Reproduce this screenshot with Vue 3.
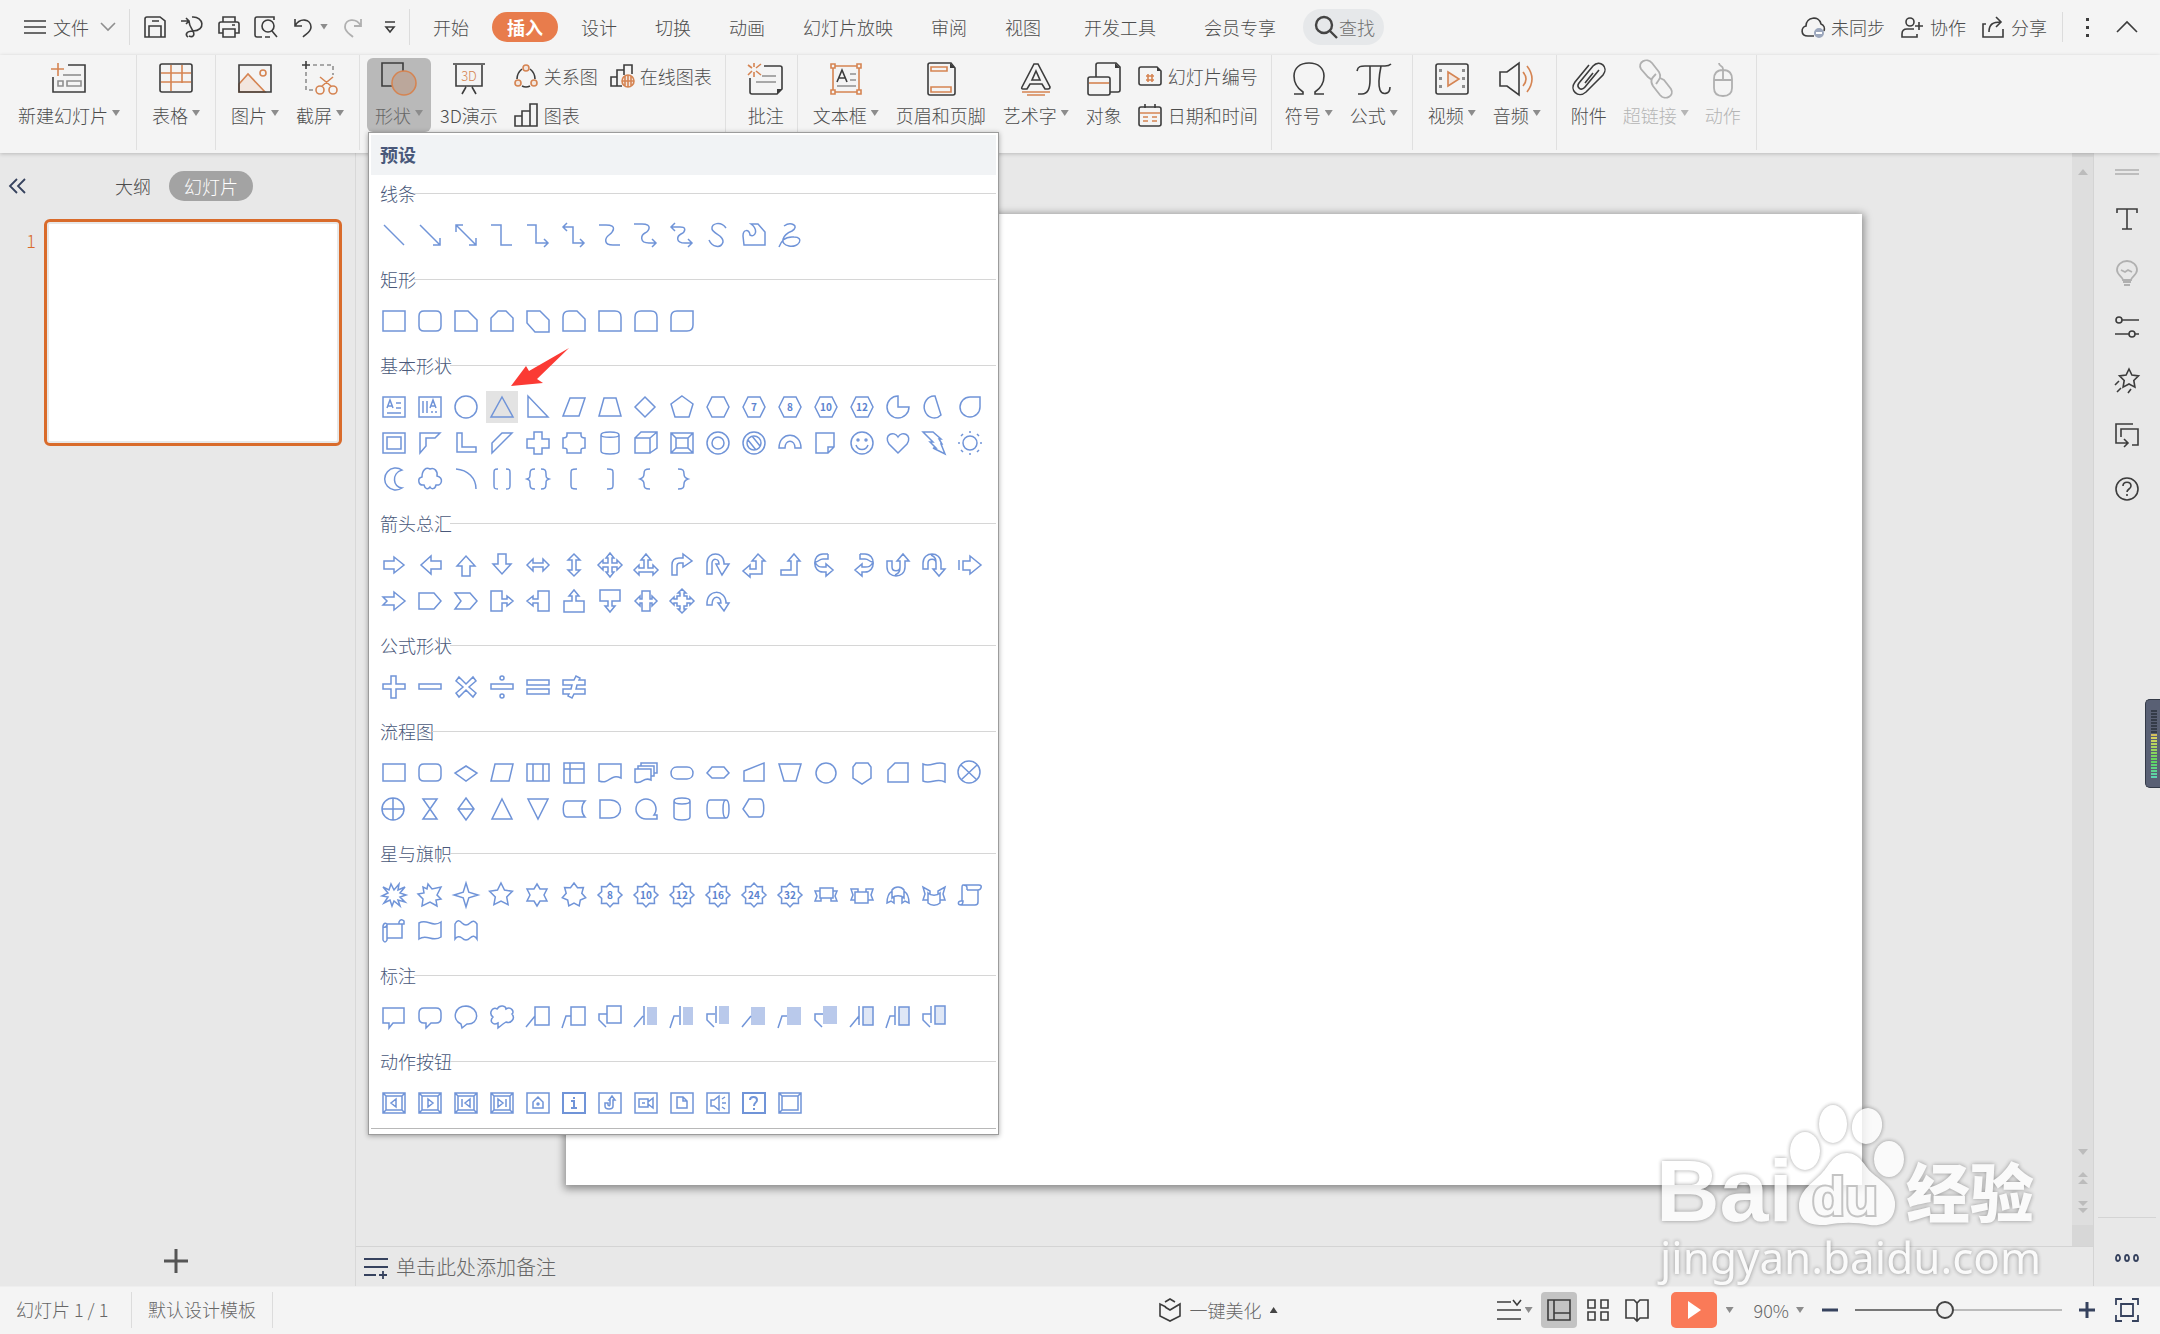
<script setup>
import { ref } from 'vue'

const poly = pts => 'M' + pts.map(p => p.map(n => Math.round(n * 10) / 10).join(' ')).join('L') + 'Z'
const star = (n, outer, inner, cx = 12, cy = 12) =>
  poly(Array.from({ length: n * 2 }, (_, i) => {
    const r = i % 2 ? inner : outer
    const a = (Math.PI * i) / n - Math.PI / 2
    return [cx + r * Math.cos(a), cy + r * Math.sin(a)]
  }))
const oval = (cx, cy, rx, ry = rx) =>
  `M${cx - rx} ${cy}a${rx} ${ry} 0 1 0 ${2 * rx} 0a${rx} ${ry} 0 1 0 ${-2 * rx} 0Z`
const box = (x, y, w, h) => `M${x} ${y}h${w}v${h}h${-w}Z`
const s = (d, o = {}) => ({ d, ...o })
const rot = a => ({ tr: `rotate(${a} 12 12)` })
const flip = { tr: 'matrix(-1 0 0 1 24 0)' }
const flipDown = { tr: 'matrix(1 0 0 -1 0 24)' }

const hexagon = 'M1 12L6 2H18L23 12L18 22H6Z'
const badge = star(8, 12, 9)
const arrow = 'M1 8H11V3L21 12L11 21V16H1Z'
const frame = box(1, 2, 22, 20)
const bevel = frame + box(4, 5, 16, 14) + 'M1 2L4 5M23 2L20 5M1 22L4 19M23 22L20 19'
const leader = ['M0 22L9 11', 'M0 23L4 11H9', 'M8 22L1 15V9H9']
const uturn = 'M1 21V10C1 -2 18 -2 18 10V11H23L16 22L10 11H13C13 5 6 5 6 10V21Z'
const curved = 'M14 1H9C-2 1 -2 19 9 19H12V23L19 17L12 11V14H9M14 1V6H9C5 6 5 9 1 9M1 9C3 14 6 14 9 14'
const swoop = 'M1 8V14C1 26 19 26 19 14V8H23L17 1L11 8H14V14C14 19 6 19 6 14V8ZM9 22C14 20 14 17 14 14'

const sections = [
  { title: '线条', shapes: [
    s('M2 2L22 22'),
    s('M2 2L22 22M22 15V22H15'),
    s('M2 2L22 22M22 15V22H15M2 9V2H9'),
    s('M1 2H11V22H22'),
    s('M1 2H10V20H22M18 16L22 20L18 24'),
    s('M1 4H11V20H22M18 16L22 20L18 24M5 0L1 4L5 8'),
    s('M1 2H8C20 2 15 9 11 12S5 22 15 22H22'),
    s('M0 1H8C19 1 15 8 11 10S5 20 15 20H22M18 16L22 20L18 24'),
    s('M1 4H8C18 3 15 9 11 11S5 20 15 20H22M18 16L22 20L18 24M5 0L1 4L5 8'),
    s('M20 5C15 -2 5 0 6 6C7 11 18 12 17 19C15 26 6 24 3 17'),
    s('M2 22L1 13C1 6 7 6 8 12C13 15 17 7 9 1H16L23 9V22Z'),
    s('M6 3C13 -2 22 3 14 8C4 12 1 21 11 23C21 25 27 14 16 14C6 13 3 19 1 24')
  ] },
  { title: '矩形', shapes: [
    s(frame),
    s('M6 2H18Q23 2 23 7V17Q23 22 18 22H6Q1 22 1 17V7Q1 2 6 2Z'),
    s('M1 2H14L23 11V22H1Z'),
    s('M8 2H16L23 9V22H1V9Z'),
    s('M1 2H14L23 11V23H9L1 14Z'),
    s('M7 2H15L23 10V22H1V8Q1 2 7 2Z'),
    s('M1 2H17Q23 2 23 8V22H1Z'),
    s('M7 2H17Q23 2 23 8V22H1V8Q1 2 7 2Z'),
    s('M7 2H23V16Q23 22 17 22H1V8Q1 2 7 2Z')
  ] },
  { title: '基本形状', shapes: [
    s(frame + 'M5 13L8 5L11 13M6 11H10M14 8H19M14 13H19M5 18H19'),
    s(frame + 'M5 6V18M9 6V18M12 13L15 5L18 13M13 11H17M14 16V18M18 16V18'),
    s(oval(12, 12, 11)),
    s('M12 2L23 22H1Z', { active: true }),
    s('M2 1V22H22Z'),
    s('M8 3H23L17 21H1Z'),
    s('M6 3H18L23 21H1Z'),
    s('M11 2L21 12L11 22L1 12Z'),
    s('M12 1L23 9L19 22H5L1 9Z'),
    s(hexagon),
    s(hexagon, { t: '7' }),
    s(hexagon, { t: '8' }),
    s(hexagon, { t: '10' }),
    s(hexagon, { t: '12' }),
    s('M12 1A11 11 0 1 0 23 12H12Z'),
    s('M13 1A10 11 0 1 0 19 20Z'),
    s('M22 2V12A10 10 0 1 1 12 2Z'),
    s(frame + box(5, 6, 14, 12)),
    s('M2 2H22L17 7H8V15L2 22Z'),
    s('M3 2H8V16H22V21H3Z'),
    s('M2 12L12 2H22L2 22Z'),
    s('M8 1H16V8H23V17H16V23H8V17H1V8H8Z'),
    s('M5 2H19V4Q19 7 23 7V17Q19 17 19 19V22H5V19Q5 17 1 17V7Q5 7 5 4Z'),
    s('M3 4V20C3 24 21 24 21 20V4C21 0 3 0 3 4C3 7 21 7 21 4'),
    s('M1 7H16V22H1ZM1 7L7 1H23V17L16 22M16 7L23 1'),
    s(frame + box(6, 7, 12, 10) + 'M1 2L6 7M23 2L18 7M1 22L6 17M23 22L18 17'),
    s(oval(12, 12, 11) + oval(12, 12, 6)),
    s(oval(12, 12, 11) + oval(12, 12, 7) + 'M6 9L14 19M10 5L18 15'),
    s('M1 17C1 0 23 0 23 17H17C17 8 7 8 7 17Z'),
    s('M2 2H20V16L14 22H2ZM14 22V16H20'),
    s(oval(12, 12, 11) + oval(8, 9, 1) + oval(16, 9, 1) + 'M6 14C8 20 16 20 18 14'),
    s('M12 22L3 13C-3 4 8 -1 12 6C16 -1 27 4 21 13Z'),
    s('M1 1H11L19 8H17L20 13H19L23 23L11 17H14L8 11H11Z'),
    s(oval(12, 12, 7) + 'M11 1H13M11 23H13M1 11V13M23 11V13M3 5L5 3M19 3L21 5M3 19L5 21M19 21L21 19'),
    s('M20 3A11 11 0 1 0 20 21C11 21 9 6 20 3Z'),
    s('M6 18C0 19 -1 11 4 10C4 3 8 0 12 2C16 0 20 4 19 9C26 11 24 19 18 18C17 23 13 22 12 20C10 23 7 22 6 18Z'),
    s('M2 2C14 3 22 11 22 22'),
    s('M8 2C4 2 4 3 4 6V18C4 21 4 22 8 22M16 2C20 2 20 3 20 6V18C20 21 20 22 16 22'),
    s('M9 2C5 2 4 3 4 7C4 10 4 11 1 12C4 13 4 14 4 17C4 21 5 22 9 22M15 2C19 2 20 3 20 7C20 10 20 11 23 12C20 13 20 14 20 17C20 21 19 22 15 22'),
    s('M15 2C9 2 9 3 9 6V18C9 21 9 22 15 22'),
    s('M9 2C15 2 15 3 15 6V18C15 21 15 22 9 22'),
    s('M16 2C11 2 10 3 10 7C10 10 9 11 6 12C9 13 10 14 10 17C10 21 11 22 16 22'),
    s('M8 2C13 2 14 3 14 7C14 10 15 11 18 12C15 13 14 14 14 17C14 21 13 22 8 22')
  ] },
  { title: '箭头总汇', shapes: [
    s('M2 8H12V4L22 12L12 20V16H2Z'),
    s(arrow, rot(180)),
    s(arrow, rot(270)),
    s(arrow, rot(90)),
    s('M1 12L7 6V10H17V6L23 12L17 18V14H7V18Z'),
    s('M1 12L7 6V10H17V6L23 12L17 18V14H7V18Z', rot(90)),
    s('M12 0L16 5H14V10H19V7L24 12L19 17V14H14V19H16L12 24L8 19H10V14H5V17L0 12L5 7V10H10V5H8Z'),
    s('M12 1L17 7H14V15H19V12L24 17L19 22V19H5V22L0 17L5 12V15H10V7H7Z'),
    s('M2 22V12Q2 5 9 5H13V1L22 8L13 14V10H10Q7 10 7 13V22Z'),
    s(uturn),
    s('M16 1L23 8H20V21H8V24L1 18L8 12V16H14V8H10Z'),
    s('M16 1L22 8H19V22H3V17H13V8H10Z'),
    s(curved),
    s(curved, flip),
    s(swoop),
    s(swoop, flipDown),
    s('M1 7V17M5 8H12V3L23 12L12 21V17H5Z'),
    s('M1 8H12V3L23 12L12 21V16H1L5 12Z'),
    s('M1 4H16L23 12L16 20H1Z'),
    s('M1 4H16L23 12L16 20H1L7 12Z'),
    s('M1 2H12V10H17V7L23 12L17 17V14H12V22H1Z'),
    s('M1 2H12V10H17V7L23 12L17 17V14H12V22H1Z', flip),
    s('M1 2H12V10H17V7L23 12L17 17V14H12V22H1Z', rot(270)),
    s('M1 2H12V10H17V7L23 12L17 17V14H12V22H1Z', rot(90)),
    s('M8 2H16V10H18V7L23 12L18 17V14H16V22H8V14H6V17L1 12L6 7V10H8Z'),
    s('M12 0L16 4H14V7H17V10H20V8L24 12L20 16V14H17V17H14V20H16L12 24L8 20H10V17H7V14H4V16L0 12L4 8V10H7V7H10V4H8Z'),
    s('M1 16C0 -1 20 0 20 14H23L18 22L12 14H15C15 6 6 6 6 16Z')
  ] },
  { title: '公式形状', shapes: [
    s('M9 1H14V9H23V14H14V23H9V14H1V9H9Z'),
    s(box(1, 9, 22, 5)),
    s('M5 2L12 9L19 2L22 6L15 12L22 18L19 22L12 15L5 22L2 18L9 12L2 6Z'),
    s(oval(12, 3, 2) + oval(12, 21, 2) + box(1, 9, 22, 5)),
    s(box(1, 5, 22, 5) + box(1, 14, 22, 5)),
    s('M1 5H12L14 1L18 3L17 5H23V10H15L14 14H23V19H12L10 23L6 21L7 19H1V14H9L10 10H1Z')
  ] },
  { title: '流程图', shapes: [
    s(box(1, 3, 22, 17)),
    s('M6 3H18Q23 3 23 8V15Q23 20 18 20H6Q1 20 1 15V8Q1 3 6 3Z'),
    s('M12 5L23 12L12 20L1 12Z'),
    s('M5 3H23L19 20H1Z'),
    s(box(1, 3, 22, 17) + 'M7 3V20M17 3V20'),
    s(box(2, 2, 20, 20) + 'M8 2V22M2 8H22'),
    s('M1 3H23V17C12 12 12 24 1 20Z'),
    s('M1 8H17V19C9 15 9 24 1 21ZM4 8V5H20V15H17M7 5V2H23V12H20'),
    s('M7 6H17C25 6 25 18 17 18H7C-1 18 -1 6 7 6Z'),
    s('M6 6H18L23 12L18 17H6L1 12Z'),
    s('M2 10L22 2V20H2Z'),
    s('M1 3H23L18 20H6Z'),
    s(oval(12, 12, 10)),
    s('M6 2H18L21 6V17L12 23L3 17V6Z'),
    s('M2 9L9 2H22V21H2Z'),
    s('M1 3C9 7 14 -1 23 3V21C14 16 9 24 1 20Z'),
    s(oval(11, 11, 11) + 'M3 4L19 19M19 4L3 19'),
    s(oval(11, 12, 11) + 'M11 1V23M0 12H22'),
    s('M5 2H19L5 22H19Z'),
    s('M12 1L20 12L12 23L4 12ZM4 12H20'),
    s('M12 2L22 22H2Z'),
    s('M2 2H22L12 22Z'),
    s('M5 4H23C19 8 19 16 23 20H5C0 20 0 4 5 4Z'),
    s('M2 3H12C26 3 26 21 12 21H2Z'),
    s('M23 22H12A10 10 0 1 1 20 18H23Z'),
    s('M4 4V20C4 24 20 24 20 20V4C20 0 4 0 4 4C4 8 20 8 20 4'),
    s('M4 3H20C24 3 24 21 20 21H4C0 21 0 3 4 3ZM20 3C16 3 16 21 20 21'),
    s('M7 2H18C23 2 23 20 18 20H7L1 12Z')
  ] },
  { title: '星与旗帜', shapes: [
    s('M1 4L7 7L9 1L12 7L17 1L16 7L23 4L18 10L24 12L18 14L23 19L16 17L18 23L12 18L10 23L8 17L2 20L6 14L0 13L6 10Z'),
    s('M10 1L14 6L23 4L19 12L23 16L18 17L19 23L12 19L4 23L5 16L0 11L6 10L5 4L9 6Z'),
    s(star(4, 12, 4)),
    s(star(5, 12, 6, 11, 12)),
    s('M11 1L14 6H21L18 12L21 18H14L11 23L8 18H1L4 12L1 6H8Z'),
    s(star(7, 12, 8)),
    s(badge, { t: '8' }),
    s(badge, { t: '10' }),
    s(badge, { t: '12' }),
    s(badge, { t: '16' }),
    s(badge, { t: '24' }),
    s(badge, { t: '32' }),
    s(box(6, 5, 13, 10) + 'M6 8H1L3 13L1 18H7V15M19 8H23L21 13L23 18H17V15'),
    s(box(5, 9, 13, 11) + 'M8 9V6H1L3 12L1 17H5M16 9V6H23L21 12L23 17H18'),
    s('M6 7C9 3 15 3 18 7V15C15 12 9 12 6 15ZM6 8C3 10 1 14 1 20L5 18L8 20V14M18 8C21 10 23 14 23 20L19 18L16 20V14'),
    s('M6 10C9 13 15 13 18 10V20C15 23 9 23 6 20ZM6 17H1L3 11L1 4L8 8V11M18 17H23L21 11L23 4L16 8V11'),
    s('M5 2H21C25 2 23 7 20 7H9M9 7V5Q9 2 5 2Q4 2 4 5V18M20 7V19Q20 22 17 22H3C-1 22 0 18 3 18H5Q5 22 2 22'),
    s('M5 5H20V19H5V21Q3 25 1 21V7Q2 3 5 5V19M20 5H22V2Q19 -1 17 3V5M1 8Q4 9 5 6'),
    s('M1 4C9 -1 14 9 23 3V18C14 24 9 14 1 20Z'),
    s('M1 5Q4 -1 8 4Q12 8 16 4Q20 0 23 5V20Q20 15 16 19Q12 23 8 19Q4 16 1 20Z')
  ] },
  { title: '标注', shapes: [
    s('M1 3H22V18H11L7 23V18H1Z'),
    s('M6 3H18Q23 3 23 8V13Q23 18 18 18H13L8 23V18H6Q1 18 1 13V8Q1 3 6 3Z'),
    s('M7 19C-3 14 1 1 12 1C26 2 26 20 13 19L8 23Z'),
    s('M8 18C3 21 -1 16 3 12C-2 8 3 1 7 4C10 -1 16 1 16 4C21 1 25 7 22 9C26 14 20 19 16 17L13 19L8 23Z'),
    s(box(9, 2, 14, 18) + leader[0]),
    s(box(9, 2, 14, 18) + leader[1]),
    s(box(9, 1, 14, 17) + leader[2]),
    s(leader[0] + 'M10 1V20', { f: box(13, 2, 10, 18), fc: 'tint' }),
    s(leader[1] + 'M10 1V20', { f: box(13, 2, 10, 18), fc: 'tint' }),
    s(leader[2] + 'M10 1V18', { f: box(13, 1, 10, 18), fc: 'tint' }),
    s(leader[0], { f: box(9, 2, 14, 18), fc: 'tint' }),
    s(leader[1], { f: box(9, 2, 14, 18), fc: 'tint' }),
    s(leader[2], { f: box(9, 1, 14, 18), fc: 'tint' }),
    s(leader[0] + 'M9 1V20' + box(13, 2, 10, 18), { f: box(13, 2, 10, 18), fc: 'pale' }),
    s(leader[1] + 'M9 1V20' + box(13, 2, 10, 18), { f: box(13, 2, 10, 18), fc: 'pale' }),
    s(leader[2] + 'M9 1V18' + box(13, 1, 10, 18), { f: box(13, 1, 10, 18), fc: 'pale' })
  ] },
  { title: '动作按钮', shapes: [
    s(bevel + 'M14 8V16L9 12Z'),
    s(bevel + 'M10 8V16L15 12Z'),
    s(bevel + 'M8 8V16M16 8V16L11 12Z'),
    s(bevel + 'M16 8V16M8 8V16L13 12Z'),
    s(frame + 'M7 11L12 6L17 11V17H7Z' + oval(12, 13, 1)),
    s(frame + 'M9 10H12V17M9 17H15M12 6V8', { bold: true }),
    s(frame + 'M11 9L14 5L17 9H15V15C15 19 7 19 7 15V12H10V14Q12 16 12 13V9Z'),
    s(frame + box(5, 8, 9, 8) + 'M14 11L19 7V17L14 13M8 12H11'),
    s(frame + 'M7 6H13L17 10V17H7ZM13 6V10H17'),
    s(frame + 'M5 9H8L13 5V19L8 15H5ZM16 8L19 6M16 12H20M16 16L19 18'),
    s(frame + 'M8 9C8 5 15 5 15 9C15 12 12 11 12 15M12 17V19', { bold: true }),
    s(frame + box(4, 5, 16, 14) + 'M1 2L4 5M23 2L20 5M1 22L4 19')
  ] }
]

const fold = 'M29 33V28H34Z'
const icons = {
  slide: [['k', 'M17 4H34V31H2V16'], ['o', 'M7 2V15M0 8H13'], ['g', 'M12 14H30'], ['g', box(7, 20, 5, 5) + box(16, 20, 14, 5)]],
  table: [['k', 'M4 3H32Q34 3 34 5V29Q34 31 32 31H4Q2 31 2 29V5Q2 3 4 3Z'], ['o', 'M13 4V30M24 4V22M3 12H33M3 21H33']],
  picture: [['of', 'M2 23L11 13L28 31H2Z'], ['o', oval(26, 12, 3)], ['k', box(2, 4, 32, 27)]],
  capture: [['k', 'M0 4H8M4 0V8'], ['g', 'M11 4H31V14M4 11V29H12', 1], ['o', oval(18, 29, 4) + oval(31, 29, 4) + 'M20 25L31 16M29 25L18 16']],
  shapes: [['k', box(1, 2, 21, 23)], ['os', oval(23, 22, 12)]],
  board: [['k', 'M2 3H34M5 4V25H31V4M15 26L11 33M21 26L25 33']],
  note: [['k', 'M16 5H32Q34 5 34 7V28L29 33H4Q2 33 2 31V17'], ['kf', fold], ['g', 'M14 15H28M8 21H28'], ['o', 'M6 2V6M6 11V16M0 4L4 7M8 10L13 14M13 3L8 7M4 10L0 14']],
  textbox: [['o', 'M5 5H31V31H5Z'], ['ow', box(3, 3, 4, 4) + box(29, 3, 4, 4) + box(3, 29, 4, 4) + box(29, 29, 4, 4)], ['k', 'M9 21L14 9L19 21M11 17H17'], ['g', 'M22 13H28M22 19H28M9 25H28']],
  header: [['k', 'M7 2H28L32 7V32Q32 34 30 34H7Q5 34 5 32V4Q5 2 7 2Z'], ['kf', 'M27 2V7H32Z'], ['ow', box(8, 6, 16, 4) + box(8, 26, 20, 5)]],
  wordart: [['k', 'M16 3H20L32 26Q32 28 30 28H27L24 23H12L9 28H5Q3 28 4 26ZM18 10L22 19H14Z'], ['o', 'M4 31H32M9 34H27']],
  object: [['k', 'M10 16V4Q10 2 12 2H30L34 6V29Q34 31 32 31H24'], ['kf', 'M29 2V7H34Z'], ['k', 'M4 16H22Q24 16 24 18V32Q24 34 22 34H4Q2 34 2 32V18Q2 16 4 16Z'], ['o', 'M3 22H23']],
  omega: [['k', 'M3 33H12V31C6 27 3 21 3 15C3 7 9 2 18 2S33 7 33 15C33 21 30 27 24 31V33H33']],
  pi: [['k', 'M1 10C2 5 5 5 9 5H29C33 5 34 4 35 3M14 5V19C14 28 11 33 6 33H2M25 5C23 15 22 24 24 29C26 34 34 34 34 26']],
  video: [['k', 'M4 3H32Q34 3 34 5V31Q34 33 32 33H4Q2 33 2 31V5Q2 3 4 3Z'], ['gf', box(5, 8, 3, 3) + box(5, 16, 3, 3) + box(5, 24, 3, 3) + box(28, 8, 3, 3) + box(28, 16, 3, 3) + box(28, 24, 3, 3)], ['of', 'M14 11L25 18L14 25Z']],
  audio: [['k', 'M1 11H8L20 2V34L8 25H1Z'], ['o', 'M24 11Q30 18 24 25M28 5Q38 18 28 31']],
  clip: [['k', 'M28 9L14 26C10 31 5 26 8 22L22 5C29 -2 38 6 32 14L15 31C7 38 -2 29 4 21L18 4M22 12L14 22']],
  link: [['l', 'M14 19L10 16L3 8C-1 1 9 -4 14 2L21 11C24 16 21 19 18 23M22 17L26 19L33 28C37 35 27 40 22 34L15 25C11 19 15 16 18 13']],
  mouse: [['l', 'M18 9C11 9 9 13 9 18V27C9 32 12 35 18 35S27 32 27 27V18C27 13 25 9 18 9ZM9 19H27M18 19V8C18 4 14 6 14 2']]
}

const small = {
  relation: [['k', 'M8 5Q3 9 3 15M8 22Q12 24 16 22M21 15Q21 9 16 5'], ['of', oval(12, 4, 3) + oval(4, 19, 3) + oval(20, 19, 3)]],
  onlineChart: [['k', 'M1 22V13H7V22ZM7 13V6H14M12 22H7M14 11V1H22V10'], ['of', oval(18, 17, 6) + 'M12 17H24M18 11V23M15 12V22M21 12V22']],
  chart: [['k', 'M1 23V13H8V23ZM8 23V8H16V23ZM16 23V1H23V23Z']],
  number: [['k', 'M3 3H19L23 7V19Q23 21 21 21H3Q1 21 1 19V5Q1 3 3 3Z'], ['kf', 'M19 3V7H23Z'], ['o', 'M10 10V18M14 10V18M8 12H16M8 16H16']],
  date: [['k', 'M3 4H21Q23 4 23 6V21Q23 23 21 23H3Q1 23 1 21V6Q1 4 3 4ZM7 1V5M17 1V5'], ['o', 'M2 10H22M5 14H10M14 14H19M5 18H10M14 18H19']],
  save: [['k', 'M4 2H17L22 6V22H2V4Q2 2 4 2ZM6 22V11H18V22M9 6H16']],
  export: [['k', 'M1 6H9M6 3L9 6L6 9M9 21C13 23 15 20 13 16C10 11 9 10 9 6M12 2C24 1 26 16 13 16C6 16 5 20 8 22']],
  print: [['k', 'M6 7V2H18V7M6 18H2V9Q2 7 4 7H20Q22 7 22 9V18H18M6 14H18V22H6ZM15 10H18']],
  preview: [['k', 'M8 22H3Q1 22 1 20V4Q1 2 3 2H20V5M16 22H11' + oval(14, 11, 6) + 'M18 16L23 22']],
  undo: [['k', 'M4 4V11H11M4 11C9 2 20 4 20 12C20 17 15 19 12 22']],
  redo: [['l', 'M20 4V11H13M20 11C15 2 4 4 4 12C4 17 9 19 12 22']],
  cloud: [['k', 'M13 21H7C-1 21 0 12 5 11C5 2 18 0 20 9C23 10 24 13 23 16'], ['bf', oval(18, 18, 5)], ['w', 'M15 18H21']],
  people: [['k', oval(10, 7, 4) + 'M14 14H7Q2 14 2 19V22H17V19M15 11H23M19 7V15']],
  share: [['k', 'M5 9H2V22H22V14M8 17C8 9 12 7 20 7M15 2L20 7L15 12']],
  text: [['k', 'M2 6V2H22V6M12 2V22M7 22H17']],
  bulb: [['l', 'M8 19C8 16 2 14 2 9A10 9 0 1 1 22 9C22 14 16 16 16 19ZM8 21H16M9 24H15M6 9L10 11L13 9L17 11']],
  sliders: [['k', oval(4, 5, 3) + 'M7 5H24M0 19H14M20 19H24' + oval(17, 19, 3)]],
  fav: [['k', star(5, 10, 5, 14, 10) + 'M4 12L0 16M6 19L2 23M16 20L13 24']],
  transition: [['k', 'M18 1H1V20H12M9 16L13 20L9 24M6 14V6H23V22H17']],
  help: [['k', oval(12, 12, 11) + 'M8 9C8 4 16 4 16 9C16 12 12 12 12 15M12 17V19']],
  notes: [['n', 'M0 4H24M0 12H24M0 20H12M15 20H23M19 16V24']],
  beauty: [['k', 'M7 4L12 1L17 4M8 9L2 6V18L12 23L22 18V6L12 12L7 9']],
  outline: [['k', 'M0 4H14M16 2L20 7L24 2M0 12H24M0 21H24']],
  normal: [['k', box(1, 2, 22, 20) + 'M7 2V22M7 15H23']],
  grid: [['k', box(2, 2, 7, 8) + box(15, 2, 7, 8) + box(2, 14, 7, 8) + box(15, 14, 7, 8)]],
  book: [['k', 'M1 2H9L12 5L15 2H23V20H15L12 23L9 20H1ZM12 5V22']],
  fit: [['n', 'M1 7V1H7M17 1H23V7M23 17V23H17M7 23H1V17' + box(6, 6, 12, 12)]]
}

const ribbon = [
  { cls: 'wide', items: [{ i: 'slide', l: '新建幻灯片', c: 1 }] },
  { items: [{ i: 'table', l: '表格', c: 1 }] },
  { items: [{ i: 'picture', l: '图片', c: 1 }, { i: 'capture', l: '截屏', c: 1 }] },
  { items: [{ i: 'shapes', l: '形状', c: 1, on: 1 }, { i: 'board', l: '3D演示', t: '3D' },
    { rows: [[['relation', '关系图'], ['onlineChart', '在线图表']], [['chart', '图表']]] }] },
  { cls: 'offset', items: [{ i: 'note', l: '批注' }] },
  { items: [{ i: 'textbox', l: '文本框', c: 1 }, { i: 'header', l: '页眉和页脚' }, { i: 'wordart', l: '艺术字', c: 1 }, { i: 'object', l: '对象' },
    { rows: [[['number', '幻灯片编号']], [['date', '日期和时间']]] }] },
  { cls: 'narrow', items: [{ i: 'omega', l: '符号', c: 1 }, { i: 'pi', l: '公式', c: 1 }] },
  { items: [{ i: 'video', l: '视频', c: 1 }, { i: 'audio', l: '音频', c: 1 }] },
  { cls: 'tight', items: [{ i: 'clip', l: '附件' }, { i: 'link', l: '超链接', c: 1, off: 1 }, { i: 'mouse', l: '动作', off: 1 }] }
]

const tabs = ['开始', '插入', '设计', '切换', '动画', '幻灯片放映', '审阅', '视图', '开发工具', '会员专享']
const quick = ['save', 'export', 'print', 'preview']
const account = [['cloud', '未同步'], ['people', '协作'], ['share', '分享']]
const sideTools = ['text', 'bulb', 'sliders', 'fav', 'transition', 'help']
const zoom = ref(43)
const search = ref('')
</script>

<template>
  <div class="app">
    <header class="menubar">
      <button class="file"><svg width="22" height="16" viewBox="0 0 22 16"><path class="k" d="M0 2H22M0 8H22M0 14H22" /></svg>文件<svg width="16" height="10" viewBox="0 0 16 10"><path class="g" d="M1 1L8 8L15 1" /></svg></button>
      <div class="quick">
        <button v-for="q in quick" :key="q" :aria-label="q"><svg class="ic" viewBox="0 0 24 24"><path v-for="(p, n) in small[q]" :key="n" :class="p[0]" :d="p[1]" /></svg></button>
        <button class="undo" aria-label="undo"><svg class="ic" viewBox="0 0 24 24"><path class="k" :d="small.undo[0][1]" /></svg><i class="caret" /></button>
        <button aria-label="redo"><svg class="ic" viewBox="0 0 24 24"><path class="l" :d="small.redo[0][1]" /></svg></button>
        <button class="more" aria-label="more"><svg width="12" height="14" viewBox="0 0 12 14"><path class="k" d="M1 2H11M2 7L6 12L10 7Z" /></svg></button>
      </div>
      <nav class="tabs">
        <button v-for="(t, n) in tabs" :key="t" :class="{ active: n === 1, far: n > 7 }"><span>{{ t }}</span></button>
      </nav>
      <label class="search">
        <svg width="24" height="24" viewBox="0 0 24 24"><path class="k2" :d="oval(10, 10, 8) + 'M16 16L23 23'" /></svg>
        <input v-model="search" type="text" placeholder="查找" aria-label="查找" />
      </label>
      <div class="account">
        <button v-for="a in account" :key="a[0]"><svg class="ic" viewBox="0 0 24 24"><path v-for="(p, n) in small[a[0]]" :key="n" :class="p[0]" :d="p[1]" /></svg>{{ a[1] }}</button>
        <div class="window">
          <button aria-label="menu"><svg width="6" height="20" viewBox="0 0 6 20"><path class="kf" :d="box(2, 1, 3, 3) + box(2, 9, 3, 3) + box(2, 17, 3, 3)" /></svg></button>
          <button aria-label="collapse"><svg width="22" height="12" viewBox="0 0 22 12"><path class="k" d="M1 11L11 1L21 11" /></svg></button>
        </div>
      </div>
    </header>

    <section class="ribbon">
      <div v-for="(g, gi) in ribbon" :key="gi" class="group" :class="g.cls">
        <template v-for="(b, bi) in g.items" :key="bi">
          <div v-if="b.rows" class="stack">
            <div v-for="(r, ri) in b.rows" :key="ri" class="stack-row">
              <button v-for="c in r" :key="c[0]"><svg class="ic" viewBox="0 0 24 24"><path v-for="(p, n) in small[c[0]]" :key="n" :class="p[0]" :d="p[1]" /></svg>{{ c[1] }}</button>
            </div>
          </div>
          <button v-else class="tool" :class="{ on: b.on, off: b.off }" :disabled="!!b.off">
            <svg width="36" height="36" viewBox="0 0 36 36">
              <path v-for="(p, n) in icons[b.i]" :key="n" :class="[p[0], { dash: p[2] }]" :d="p[1]" />
              <text v-if="b.t" class="board-text" x="18" y="20">{{ b.t }}</text>
            </svg>
            <span class="label">{{ b.l }}<i v-if="b.c" class="caret" /></span>
          </button>
        </template>
      </div>
    </section>

    <main class="work">
      <aside class="slides">
        <div class="slides-head">
          <button class="fold" aria-label="fold"><svg width="18" height="16" viewBox="0 0 18 16"><path class="n" d="M8 1L1 8L8 15M16 1L9 8L16 15" /></svg></button>
          <button class="view">大纲</button>
          <button class="view current">幻灯片</button>
        </div>
        <div class="thumb-row"><span class="index">1</span><div class="thumb" /></div>
        <button class="add" aria-label="add"><svg width="26" height="26" viewBox="0 0 26 26"><path d="M13 1V25M1 13H25" /></svg></button>
      </aside>

      <section class="editor">
        <div class="stage">
          <div class="canvas"><div class="page" /></div>
          <div class="scroll">
            <i class="cap" />
            <svg width="10" height="6" viewBox="0 0 10 6"><path d="M0 6L5 0L10 6Z" /></svg>
            <span class="spacer" />
            <svg width="10" height="6" viewBox="0 0 10 6"><path d="M0 0L5 6L10 0Z" /></svg>
            <svg class="jump" width="10" height="12" viewBox="0 0 10 12"><path d="M0 5L5 0L10 5ZM0 12L5 7L10 12Z" /></svg>
            <svg class="jump" width="10" height="12" viewBox="0 0 10 12"><path d="M0 0L5 5L10 0ZM0 7L5 12L10 7Z" /></svg>
            <i class="cap foot" />
          </div>
        </div>
        <div class="notes"><svg class="ic" viewBox="0 0 24 24"><path class="n" :d="small.notes[0][1]" /></svg>单击此处添加备注</div>
      </section>

      <aside class="side">
        <svg class="grip" width="24" height="6" viewBox="0 0 24 6"><path d="M0 1H24M0 5H24" /></svg>
        <button v-for="t in sideTools" :key="t" :aria-label="t"><svg class="ic" viewBox="0 0 24 24"><path v-for="(p, n) in small[t]" :key="n" :class="p[0]" :d="p[1]" /></svg></button>
        <button class="dots" aria-label="more"><svg width="26" height="8" viewBox="0 0 26 8"><path class="n" :d="oval(4, 4, 2, 3) + oval(13, 4, 2, 3) + oval(22, 4, 2, 3)" /></svg></button>
      </aside>
    </main>

    <footer class="status">
      <span class="cell count">幻灯片 1 / 1</span>
      <span class="cell">默认设计模板</span>
      <button class="beauty"><svg class="ic" viewBox="0 0 24 24"><path class="k" :d="small.beauty[0][1]" /></svg>一键美化<i class="caret up" /></button>
      <div class="tools">
        <button class="outline" aria-label="outline"><svg class="ic" viewBox="0 0 24 24"><path class="k" :d="small.outline[0][1]" /></svg><i class="caret" /></button>
        <button class="mode on" aria-label="normal"><svg class="ic" viewBox="0 0 24 24"><path class="k" :d="small.normal[0][1]" /></svg></button>
        <button class="mode" aria-label="grid"><svg class="ic" viewBox="0 0 24 24"><path class="k" :d="small.grid[0][1]" /></svg></button>
        <button class="mode" aria-label="book"><svg class="ic" viewBox="0 0 24 24"><path class="k" :d="small.book[0][1]" /></svg></button>
        <button class="play" aria-label="play"><svg width="14" height="18" viewBox="0 0 14 18"><path d="M1 0L14 9L1 18Z" /></svg></button>
        <i class="caret play-caret" />
        <button class="percent">90%<i class="caret" /></button>
        <button class="step" aria-label="zoom out"><svg width="16" height="16" viewBox="0 0 16 16"><path d="M0 8H16" /></svg></button>
        <input v-model="zoom" class="range" type="range" min="0" max="100" aria-label="zoom" />
        <button class="step" aria-label="zoom in"><svg width="16" height="16" viewBox="0 0 16 16"><path d="M0 8H16M8 0V16" /></svg></button>
        <button aria-label="fit"><svg class="ic" viewBox="0 0 24 24"><path class="n" :d="small.fit[0][1]" /></svg></button>
      </div>
    </footer>

    <div class="menu">
      <h2>预设</h2>
      <div class="body">
        <section v-for="sec in sections" :key="sec.title">
          <h3>{{ sec.title }}</h3>
          <div class="cells">
            <button v-for="(sh, n) in sec.shapes" :key="n" :class="{ active: sh.active }" :aria-label="sec.title + (n + 1)">
              <svg width="24" height="24" viewBox="0 0 24 24">
                <path v-if="sh.f" :class="sh.fc" :d="sh.f" />
                <path :class="{ bold: sh.bold }" :d="sh.d" :transform="sh.tr" />
                <text v-if="sh.t" x="12" y="16">{{ sh.t }}</text>
              </svg>
            </button>
          </div>
        </section>
      </div>
    </div>

    <svg class="pointer" width="60" height="40" viewBox="0 0 60 40"><path d="M59 0L27 31L33 35L1 38L16 18L19 23Z" /></svg>

    <div class="meter"><i v-for="n in 23" :key="n" :style="{ background: n < 9 ? '#343b48' : `hsl(${50 + (n - 9) * 8} 58% 60%)` }" /></div>

    <svg class="mark" width="400" height="200" viewBox="0 0 400 200">
      <g class="glow">
        <text class="bai" x="0" y="121">Bai</text>
        <ellipse cx="149" cy="51" rx="15" ry="19" /><ellipse cx="177" cy="24" rx="14" ry="19" /><ellipse cx="211" cy="26" rx="15" ry="18" transform="rotate(12 211 26)" /><ellipse cx="233" cy="59" rx="15" ry="18" />
        <path d="M191 53C177 53 173 66 166 73C158 82 143 90 143 106C143 121 154 126 170 125C186 122 199 122 214 125C230 127 240 118 239 102C237 87 225 81 216 73C208 66 204 53 191 53Z" />
        <text class="jy" x="250" y="117">经验</text>
        <text class="url" x="4" y="174">jingyan.baidu.com</text>
      </g>
      <text class="du" x="156" y="115">du</text>
    </svg>
  </div>
</template>

<style>
body { margin: 0; }
</style>

<style scoped>
.app {
  position: relative;
  display: flex;
  flex-direction: column;
  min-height: 100vh;
  overflow: hidden;
  background: #f4f4f4;
  color: #4c4c4c;
  font: 300 18px/26px "Noto Sans CJK SC", sans-serif;
}
* { box-sizing: border-box; }
button {
  display: flex;
  align-items: center;
  padding: 0;
  border: 0;
  background: none;
  color: inherit;
  font: inherit;
  white-space: nowrap;
}
svg { flex: none; fill: none; overflow: visible; }
.ic { width: 24px; height: 24px; }
.k { stroke: #3c3c3c; stroke-width: 1.6; }
.k2 { stroke: #444; stroke-width: 2.4; }
.kf { fill: #3c3c3c; }
.n { stroke: #36425e; stroke-width: 1.8; }
.g { stroke: #8f8f8f; stroke-width: 1.6; }
.gf { fill: #8f8f8f; }
.l { stroke: #b0b0b0; stroke-width: 1.8; }
.o { stroke: #d58452; stroke-width: 1.6; }
.of { stroke: #d58452; stroke-width: 1.6; fill: #f2e6df; }
.ow { stroke: #d58452; stroke-width: 1.6; fill: #f4f4f4; }
.os { stroke: #d58452; stroke-width: 1.6; fill: #bba79b; }
.bf { fill: #9ba6bc; }
.w { stroke: #fff; stroke-width: 2; }
.dash { stroke-dasharray: 4 3; }
.caret {
  width: 8px;
  height: 6px;
  background: #8c8c8c;
  clip-path: polygon(0 0, 100% 0, 50% 100%);
}
.caret.up { background: #444; clip-path: polygon(50% 0, 100% 100%, 0 100%); }

.menubar { display: flex; align-items: center; height: 55px; padding: 0 0 2px 24px; }
.file { gap: 7px; height: 36px; padding-right: 13px; border-right: 1px solid #dcdcdc; }
.file svg:last-child { margin-left: 4px; }
.quick { display: flex; align-items: center; gap: 13px; height: 36px; padding: 0 13px; border-right: 1px solid #dcdcdc; }
.quick .caret { margin-left: 5px; }
.more { padding: 0 0 0 6px; }
.tabs { display: flex; margin-left: 4px; }
.tabs button { padding: 0 4px; }
.tabs span { padding: 2px 15px; border-radius: 15px; }
.tabs .far { padding: 0 9px; }
.tabs .active span { background: #e87c4c; color: #fff; font-weight: 700; }
.search { display: flex; align-items: center; gap: 1px; width: 81px; height: 36px; margin-left: 3px; padding-left: 11px; border-radius: 18px; background: #e6e8ea; }
.search input { width: 42px; padding: 0; border: 0; outline: 0; background: none; font: inherit; }
.search input::placeholder { color: #707070; opacity: 1; }
.account { display: flex; gap: 15px; margin-left: auto; padding-right: 22px; }
.account > button { gap: 6px; }
.window { display: flex; align-items: center; gap: 26px; height: 30px; padding-left: 21px; border-left: 1px solid #dcdcdc; }

.ribbon { position: relative; display: flex; height: 98px; box-shadow: 0 1px 4px #0003; z-index: 1; }
.group { display: flex; align-items: flex-start; gap: 1px; height: 95px; padding: 3px 7px 0; border-right: 1px solid #e0e0e0; }
.wide { padding-left: 10px; padding-right: 8px; }
.offset { padding-left: 14px; padding-right: 5px; }
.narrow { padding-left: 5px; padding-right: 6px; }
.tight { padding-left: 6px; gap: 0; }
.tool { flex-direction: column; gap: 5px; height: 74px; padding: 3px 8px 0; border-radius: 6px; }
.tool.on { background: #b9b9b9; color: #666; }
.tool.off { color: #b5b5b5; }
.tool.off .caret { background: #b5b5b5; }
.label { display: flex; align-items: center; gap: 4px; }
.label .caret { margin-bottom: 4px; }
.board-text { fill: #d58452; font-size: 13px; text-anchor: middle; }
.stack { display: flex; flex-direction: column; gap: 13px; padding: 5px 6px 0 7px; }
.stack-row { display: flex; gap: 12px; }
.stack-row button { gap: 6px; }

.work { display: flex; flex: 1; background: #e8e8e8; }
.slides { display: flex; flex-direction: column; width: 356px; border-right: 1px solid #d8d8d8; }
.slides-head { display: flex; align-items: center; padding: 18px 0 18px 9px; }
.view { margin-left: 88px; }
.view.current { margin-left: 18px; padding: 2px 15px; border-radius: 15px; background: #a3a3a3; color: #fff; }
.thumb-row { display: flex; }
.index { width: 44px; padding: 8px 8px 0 0; color: #d96b2b; text-align: right; }
.thumb { width: 298px; aspect-ratio: 298 / 227; border: 3px solid #d96b2b; border-radius: 6px; background: #fff; box-shadow: inset 0 0 0 2px #e8e8e8; }
.add { margin: auto auto 12px 163px; }
.add path { stroke: #555; stroke-width: 3; }
.editor { display: flex; flex: 1; flex-direction: column; border-right: 1px solid #d4d4d4; }
.stage { display: flex; flex: 1; border-bottom: 1px solid #d4d4d4; }
.canvas { display: flex; flex: 1; align-items: center; justify-content: center; }
.page { width: 75.5%; aspect-ratio: 4 / 3; background: #fff; box-shadow: 0 2px 8px 2px #0006; }
.scroll { display: flex; flex-direction: column; align-items: center; width: 21px; background: #dedede; }
.scroll path { fill: #bcbcbc; }
.cap { width: 100%; height: 4px; margin-bottom: 12px; background: #d7d7d7; }
.cap.foot { height: 21px; margin: 12px 0 0; }
.spacer { flex: 1; }
.jump { margin-top: 17px; }
.notes { display: flex; align-items: center; gap: 8px; height: 39px; padding-left: 8px; color: #666; font-size: 20px; }
.side { display: flex; flex-direction: column; align-items: center; gap: 30px; width: 66px; padding-top: 16px; }
.side .grip + button { margin-top: 2px; }
.grip path { stroke: #bdbdbd; stroke-width: 2; }
.dots { justify-content: center; width: 58px; height: 69px; margin-top: auto; border-top: 1px solid #d4d4d4; }
.dots svg { margin-top: 12px; }

.status { display: flex; align-items: center; height: 48px; padding-bottom: 1px; border-top: 1px solid #eee; color: #666; }
.cell { height: 36px; padding: 4px 16px; border-right: 1px solid #dcdcdc; }
.count { min-width: 132px; }
.beauty { gap: 8px; margin-left: auto; }
.tools { display: flex; align-items: center; margin-left: 219px; padding-right: 21px; }
.outline { gap: 4px; margin-right: 8px; }
.mode { justify-content: center; width: 36px; height: 36px; margin-right: 3px; border-radius: 4px; }
.mode.on { background: #c3c3c3; }
.play { justify-content: center; width: 46px; height: 36px; margin-left: 13px; border-radius: 5px; background: #fa7a58; }
.play path { fill: #fff; }
.play-caret { margin: 0 20px 0 9px; }
.percent { gap: 7px; margin-right: 18px; }
.step path { stroke: #36425e; stroke-width: 3; }
.range { width: 207px; height: 20px; margin: 0 17px; appearance: none; background: linear-gradient(90deg, #777 43%, #bbb 43%) center / 100% 2px no-repeat; }
.range::-webkit-slider-thumb { appearance: none; width: 18px; height: 18px; border: 2px solid #444; border-radius: 50%; background: #eee; }
.step + button { margin-left: 20px; }

.menu { position: absolute; top: 132px; left: 368px; z-index: 2; width: 631px; padding: 2px 2px 5px; border: 1px solid #9c9c9c; background: #fff; box-shadow: 0 1px 5px #0005; color: #49587a; }
h2, h3 { margin: 0; font-size: 18px; line-height: 26px; }
h2 { padding: 6px 9px 8px; background: #f1f3f5; }
.body { padding: 5px 0 0 5px; border-bottom: 1px solid #b8b8b8; }
.body section { padding-bottom: 13px; }
.body section:last-child { padding-bottom: 7px; }
h3 { display: flex; align-items: center; padding-left: 4px; font-weight: 300; }
h3::after { flex: 1; height: 1px; margin-left: -2px; background: #d6d6d6; content: ""; }
.cells { display: flex; flex-wrap: wrap; margin-top: 11px; }
.cells button { justify-content: center; width: 32px; height: 32px; margin: 2px; }
.cells .active { background: #e3e3e3; }
.cells path { stroke: #7094d8; stroke-width: 1.5; }
.cells .bold { stroke-width: 2; }
.cells .tint { fill: #b9c9eb; stroke: none; }
.cells .pale { fill: #dfe7f6; stroke: none; }
.cells text { fill: #5c83cf; font-size: 10px; font-weight: 700; text-anchor: middle; }

.pointer { position: absolute; top: 348px; left: 510px; z-index: 3; }
.pointer path { fill: #fb3a34; }
.meter { position: absolute; top: 699px; right: 0; display: flex; flex-direction: column; gap: 1px; width: 15px; height: 89px; padding: 10px 3px 0 5px; border: 1px solid #333a47; border-right: 0; border-radius: 5px 0 0 5px; background: #596074; }
.meter i { height: 2px; }
.mark { position: absolute; right: 104px; bottom: 34px; z-index: 3; pointer-events: none; }
.glow { fill: #fff; filter: drop-shadow(0 0 2px #0007); opacity: 0.8; }
.mark text { font-weight: 700; }
.mark .bai { font-family: "Liberation Sans", sans-serif; font-size: 88px; }
.mark .du { fill: #fafafa; stroke: #c4c4c4; stroke-width: 4; paint-order: stroke; font-family: "Liberation Sans", sans-serif; font-size: 54px; }
.mark .jy { font-size: 64px; font-weight: 900; }
.mark .url { font-family: "Noto Sans", sans-serif; font-size: 44px; font-weight: 400; }
</style>
